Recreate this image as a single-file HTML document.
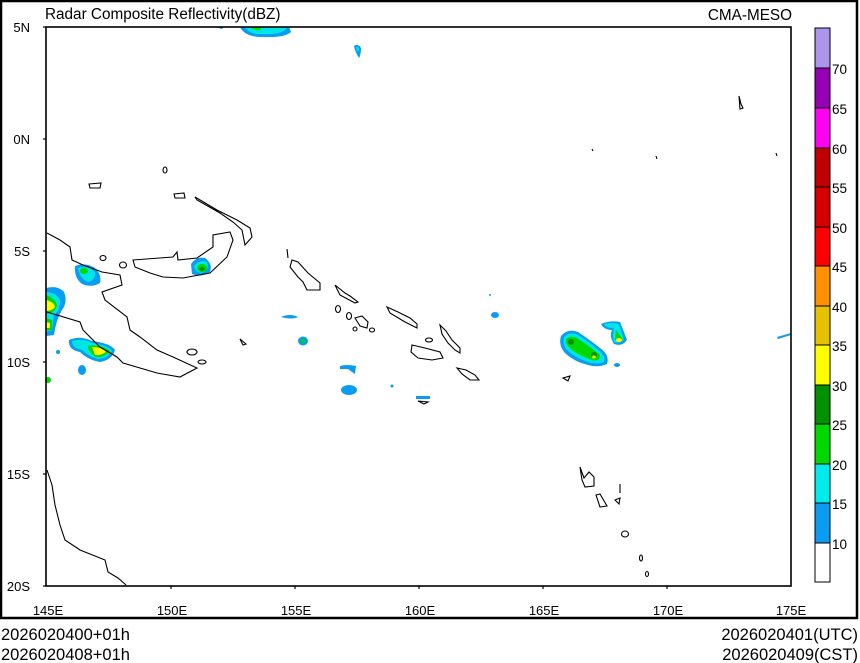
<!DOCTYPE html>
<html><head><meta charset="utf-8"><style>
html,body{margin:0;padding:0;background:#fff;}
body{width:860px;height:663px;overflow:hidden;position:relative;font-family:"Liberation Sans",Arial,sans-serif;}
svg{position:absolute;left:0;top:0;}
</style></head><body>
<svg width="860" height="663" viewBox="0 0 860 663" font-family="Liberation Sans, Arial, sans-serif">
<rect x="1" y="1" width="856" height="617" fill="#fff" stroke="#000" stroke-width="2.5"/>
<text x="45" y="19" font-size="15.3">Radar Composite Reflectivity(dBZ)</text>
<text x="792" y="20" font-size="15.3" text-anchor="end">CMA-MESO</text>

<g>
<path d="M240,27 Q245,37 262,37 Q285,38 291,32 L289,27 Z" fill="#0a9cf2"/>
<path d="M245,27 Q250,35 262,34 Q282,35 287,28 L286,27Z" fill="#00e6e6"/>
<path d="M250,27 Q255,31 260,30 L262,27Z" fill="#00d800"/>
<path d="M215,27 L224,27 L222,29 Z" fill="#0a9cf2"/>
<path d="M354,46 Q358,43 361,48 Q361,55 359,58 Q355,52 354,46Z" fill="#0a9cf2"/>
<path d="M356,47 Q359,46 359,50 L357,52Z" fill="#00e6e6"/>
<path d="M75,266 Q85,262 95,268 Q102,275 100,283 Q92,288 82,284 Q74,278 75,266Z" fill="#0a9cf2"/>
<path d="M78,268 Q88,265 95,272 Q96,280 88,282 Q80,279 78,268Z" fill="#00e6e6"/>
<ellipse cx="84" cy="271" rx="4" ry="3" fill="#00d800"/>
<path d="M191,264 Q196,256 205,258 Q213,264 210,272 Q200,278 192,274Z" fill="#0a9cf2"/>
<path d="M194,266 Q200,259 207,262 Q210,270 202,273 Q195,272 194,266Z" fill="#00e6e6"/>
<ellipse cx="202" cy="268" rx="5" ry="4" fill="#00d800"/>
<ellipse cx="202" cy="269" rx="2.5" ry="2" fill="#009000"/>
<path d="M46,288 Q58,285 64,292 Q68,302 62,310 Q56,320 54,335 L46,336Z" fill="#0a9cf2"/>
<path d="M46,292 Q56,292 60,300 Q60,310 54,315 L52,330 L46,332Z" fill="#00e6e6"/>
<path d="M46,295 Q55,298 57,305 Q56,312 46,314Z" fill="#00d800"/>
<path d="M46,300 Q54,302 55,307 Q52,311 46,311Z" fill="#ffff00"/>
<path d="M46,318 L52,320 L52,330 L46,330Z" fill="#00d800"/>
<path d="M46,322 L50,323 L50,328 L46,328Z" fill="#ffff00"/>
<ellipse cx="48" cy="380" rx="3" ry="3" fill="#00d800"/>
<path d="M69,340 Q80,335 92,341 Q110,343 115,350 Q112,360 100,362 Q88,360 80,352 Q68,350 69,340Z" fill="#0a9cf2"/>
<path d="M72,341 Q84,338 92,343 Q108,345 112,351 Q108,358 98,359 Q88,356 82,350 Q72,348 72,341Z" fill="#00e6e6"/>
<path d="M88,346 Q100,344 110,351 Q104,358 96,357 Q88,353 88,346Z" fill="#00d800"/>
<path d="M92,347 Q102,347 106,352 Q100,356 95,355Z" fill="#ffff00"/>
<ellipse cx="82" cy="370" rx="4" ry="5" fill="#0a9cf2"/>
<ellipse cx="58" cy="352" rx="2" ry="2" fill="#0a9cf2"/>
<path d="M281,317 Q290,313 298,317 Q292,320 281,317Z" fill="#0a9cf2"/>
<ellipse cx="303" cy="341" rx="5" ry="4.5" fill="#0a9cf2"/>
<ellipse cx="303" cy="341" rx="2" ry="2" fill="#00d800"/>
<path d="M340,366 Q346,364 356,366 L355,374 L352,372 L348,369 L340,369Z" fill="#0a9cf2"/>
<ellipse cx="349" cy="390" rx="8" ry="5" fill="#0a9cf2"/>
<ellipse cx="392" cy="386" rx="1.5" ry="1.5" fill="#0a9cf2"/>
<path d="M416,396 L430,396 L430,399 L416,399Z" fill="#0a9cf2"/>
<ellipse cx="495" cy="315" rx="4" ry="3" fill="#0a9cf2"/>
<ellipse cx="490" cy="295" rx="1" ry="1" fill="#0a9cf2"/>
<path d="M561,336 Q568,328 578,332 Q590,340 600,348 Q610,355 607,364 Q598,368 588,365 Q575,362 566,354 Q558,346 561,336Z" fill="#0a9cf2"/>
<path d="M564,337 Q570,331 578,335 Q590,342 598,350 Q606,356 604,362 Q596,365 588,362 Q576,358 568,351 Q562,345 564,337Z" fill="#00e6e6"/>
<path d="M566,339 Q572,334 580,340 Q592,348 600,355 Q600,362 592,360 Q580,356 572,350 Q565,345 566,339Z" fill="#00d800"/>
<ellipse cx="571" cy="342" rx="3" ry="3" fill="#009000"/>
<ellipse cx="594" cy="355" rx="3" ry="3" fill="#009000"/>
<ellipse cx="594" cy="357" rx="1.8" ry="1.5" fill="#ffff00"/>
<path d="M601,324 Q610,320 620,322 Q624,332 627,340 Q622,347 614,344 Q609,336 612,330 Q604,330 601,324Z" fill="#0a9cf2"/>
<path d="M604,324 Q612,322 619,324 Q622,334 624,340 Q618,344 614,342 Q612,334 614,328 Q606,328 604,324Z" fill="#00e6e6"/>
<path d="M616,330 Q620,335 623,340 Q618,342 615,340Z" fill="#00d800"/>
<ellipse cx="619" cy="340" rx="3" ry="2" fill="#ffff00"/>
<ellipse cx="617" cy="365" rx="3" ry="2" fill="#0a9cf2"/>
<path d="M777,337 L791,333 L791,335 L778,339Z" fill="#0a9cf2"/>
</g>

<g fill="none" stroke="#000" stroke-width="1.1">
<path d="M47,233 L60,240 L70,247 L72,260 L83,265 L102,272 L120,275 L122,285 L102,292 L105,300 L127,317 L130,330 L140,337 L157,350 L173,357 L197,368 L180,377 L157,373 L123,363 L117,357 L100,347 L83,330 L80,322 L47,312"/>
<path d="M47,470 L52,485 L55,505 L60,525 L65,540 L80,550 L95,556 L105,560 L108,572 L118,578 L126,585"/>
<path d="M133,260 L173,257 L177,252 L178,260 L197,258 L213,247 L213,235 L230,232 L233,240 L227,257 L210,273 L183,278 L163,277 L150,273 L135,267Z"/>
<path d="M195,197 L217,210 L237,220 L250,228 L252,237 L245,245 L242,230 L233,222 L220,213 L197,200Z"/>
<path d="M89,184 L101,183 L100,188 L90,188Z"/>
<path d="M174,194 L184,193 L185,198 L175,198Z"/>
<ellipse cx="165" cy="170" rx="2" ry="3"/>
<ellipse cx="103" cy="258" rx="3" ry="2.5"/>
<ellipse cx="123" cy="265" rx="3.5" ry="3"/>
<ellipse cx="192" cy="352" rx="5" ry="3"/>
<ellipse cx="202" cy="362" rx="4" ry="2"/>
<path d="M240,339 L246,344 L243,345Z"/>
<path d="M287,249 L288,258"/>
<path d="M292,260 L298,262 L308,273 L320,283 L320,290 L307,290 L303,282 L298,277 L290,267Z"/>
<path d="M335,285 L345,293 L350,296 L358,302 L355,303 L340,295Z"/>
<ellipse cx="338" cy="309" rx="2.5" ry="3.5"/>
<ellipse cx="349" cy="316" rx="2.5" ry="3.5"/>
<path d="M355,318 L362,316 L368,322 L367,328 L360,326Z"/>
<ellipse cx="355" cy="329" rx="2" ry="2"/>
<ellipse cx="372" cy="330" rx="2.5" ry="2"/>
<path d="M387,307 L398,312 L410,318 L417,324 L417,328 L405,322 L390,313Z"/>
<path d="M440,325 L446,331 L452,340 L460,348 L460,353 L455,350 L448,343 L442,334Z"/>
<ellipse cx="429" cy="340" rx="3.5" ry="2"/>
<path d="M412,345 L425,348 L440,352 L443,358 L432,360 L418,358 L411,352Z"/>
<path d="M457,368 L466,370 L475,375 L479,380 L470,380 L462,374Z"/>
<path d="M418,401 L428,402 L424,404Z"/>
<path d="M563,378 L570,376 L568,381Z"/>
<path d="M580,467 L584,478 L589,472 L594,477 L594,486 L585,487 L582,480Z"/>
<path d="M596,495 L600,494 L607,506 L600,507Z"/>
<path d="M615,500 L620,498 L619,504Z"/>
<path d="M620,484 L620,493"/>
<ellipse cx="625" cy="534" rx="3.5" ry="3"/>
<ellipse cx="641" cy="558" rx="1.5" ry="3"/>
<ellipse cx="647" cy="574" rx="1.5" ry="2.5"/>
<path d="M739,96 L741,104 L743,108 L740,109 Z"/>
<path d="M592,149 L593,151"/>
<path d="M656,156 L657,159"/>
<path d="M776,153 L777,156"/>
</g>

<rect x="46" y="27" width="745" height="559" fill="none" stroke="#000" stroke-width="1.6"/>
<g stroke="#000" stroke-width="1.2">
<line x1="43" y1="27" x2="46" y2="27"/><line x1="43" y1="139" x2="46" y2="139"/><line x1="43" y1="251" x2="46" y2="251"/>
<line x1="43" y1="362" x2="46" y2="362"/><line x1="43" y1="474" x2="46" y2="474"/><line x1="43" y1="586" x2="46" y2="586"/>
<line x1="171" y1="586" x2="171" y2="589"/><line x1="295" y1="586" x2="295" y2="589"/><line x1="419" y1="586" x2="419" y2="589"/>
<line x1="543" y1="586" x2="543" y2="589"/><line x1="667" y1="586" x2="667" y2="589"/>
</g>
<g font-size="13" text-anchor="end">
<text x="30" y="32">5N</text><text x="30" y="144">0N</text><text x="30" y="256">5S</text>
<text x="30" y="367">10S</text><text x="30" y="479">15S</text><text x="30" y="591">20S</text>
</g>
<g font-size="13" text-anchor="middle">
<text x="48" y="615">145E</text><text x="172" y="615">150E</text><text x="296" y="615">155E</text>
<text x="420" y="615">160E</text><text x="544" y="615">165E</text><text x="668" y="615">170E</text><text x="791" y="615">175E</text>
</g>

<g stroke="#000" stroke-width="1">
<rect x="815" y="28" width="15" height="40" fill="#ad94ec"/>
<rect x="815" y="68" width="15" height="40" fill="#9600b4"/>
<rect x="815" y="108" width="15" height="40" fill="#ff00f0"/>
<rect x="815" y="148" width="15" height="39" fill="#c00000"/>
<rect x="815" y="187" width="15" height="40" fill="#d60000"/>
<rect x="815" y="227" width="15" height="39" fill="#ff0000"/>
<rect x="815" y="266" width="15" height="40" fill="#ff9000"/>
<rect x="815" y="306" width="15" height="39" fill="#e7c000"/>
<rect x="815" y="345" width="15" height="40" fill="#ffff00"/>
<rect x="815" y="385" width="15" height="39" fill="#009000"/>
<rect x="815" y="424" width="15" height="40" fill="#00d800"/>
<rect x="815" y="464" width="15" height="39" fill="#00ecec"/>
<rect x="815" y="503" width="15" height="40" fill="#0a9cf2"/>
<rect x="815" y="543" width="15" height="39" fill="#ffffff"/>
</g>
<g font-size="13.5">
<text x="832" y="74">70</text><text x="832" y="114">65</text><text x="832" y="154">60</text>
<text x="832" y="193">55</text><text x="832" y="233">50</text><text x="832" y="272">45</text>
<text x="832" y="312">40</text><text x="832" y="351">35</text><text x="832" y="391">30</text>
<text x="832" y="430">25</text><text x="832" y="470">20</text><text x="832" y="509">15</text>
<text x="832" y="549">10</text>
</g>

<g font-size="16.5">
<text x="1" y="640">2026020400+01h</text>
<text x="1" y="660">2026020408+01h</text>
<text x="858" y="640" text-anchor="end">2026020401(UTC)</text>
<text x="858" y="660" text-anchor="end">2026020409(CST)</text>
</g>
</svg>
</body></html>
